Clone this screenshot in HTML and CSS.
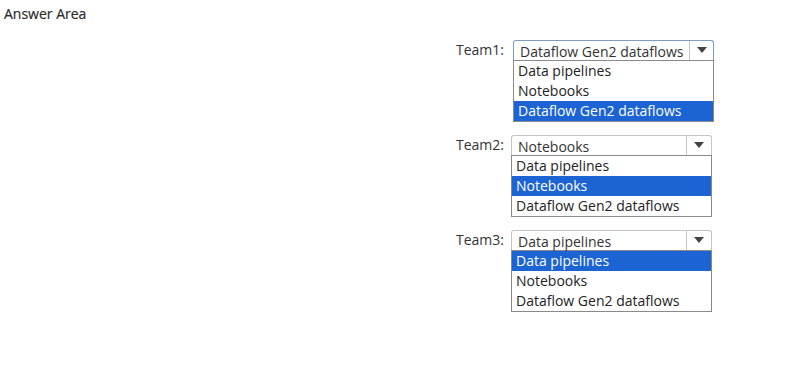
FILE: index.html
```html
<!DOCTYPE html>
<html lang="en">
<head>
  <meta charset="UTF-8">
  <meta name="viewport" content="width=device-width, initial-scale=1.0">
  <title>Answer Area</title>
  <link rel="stylesheet" href="styles.css">
</head>
<body>
  <div class="title">Answer Area</div>

  <div class="teams">
    <!-- Team1 -->
    <div class="team team-first">
      <div class="team-label">Team1:</div>
      <div class="dropdown">
        <div class="select focused">
          <span class="select-value">Dataflow Gen2 dataflows</span>
          <span class="select-arrow"></span>
        </div>
        <ul class="options">
          <li>Data pipelines</li>
          <li>Notebooks</li>
          <li class="selected">Dataflow Gen2 dataflows</li>
        </ul>
      </div>
    </div>

    <!-- Team2 -->
    <div class="team">
      <div class="team-label">Team2:</div>
      <div class="dropdown">
        <div class="select">
          <span class="select-value">Notebooks</span>
          <span class="select-arrow"></span>
        </div>
        <ul class="options">
          <li>Data pipelines</li>
          <li class="selected">Notebooks</li>
          <li>Dataflow Gen2 dataflows</li>
        </ul>
      </div>
    </div>

    <!-- Team3 -->
    <div class="team">
      <div class="team-label">Team3:</div>
      <div class="dropdown">
        <div class="select">
          <span class="select-value">Data pipelines</span>
          <span class="select-arrow"></span>
        </div>
        <ul class="options">
          <li class="selected">Data pipelines</li>
          <li>Notebooks</li>
          <li>Dataflow Gen2 dataflows</li>
        </ul>
      </div>
    </div>
  </div>
</body>
</html>
```

FILE: styles.css
```css
html, body {
  margin: 0;
  padding: 0;
  background: #fff;
  color: #222;
  font-family: "Open Sans", "Noto Sans", sans-serif;
  font-size: 14px;
}

.title {
  padding: 5px 0 0 4px;
  font-size: 14px;
  line-height: 18px;
  color: #2a2a2a;
  -webkit-text-stroke: 0.2px #2a2a2a;
}

.teams {
  display: flex;
  flex-direction: column;
  gap: 13px;
  margin: 17px 0 0 456px;
}

.team {
  display: flex;
  align-items: flex-start;
}

.team-label {
  width: 55px;
  line-height: 20px;
  font-size: 14px;
  color: #333;
}

.team-first .team-label {
  width: 57px;
}

.dropdown {
  width: 201px;
}

/* Closed select box */
.select {
  display: flex;
  height: 19px;
  border: 1px solid #c4c4c4;
  border-bottom: none;
  border-radius: 3px 3px 0 0;
}

.select.focused {
  border-color: #7f9cc4;
}

.select-value {
  flex: 1;
  padding: 0 6px;
  line-height: 22px;
  height: 19px;
  white-space: nowrap;
  color: #333;
}

.select-arrow {
  width: 24px;
  border-left: 1px solid #c4c4c4;
  position: relative;
}

.select-arrow::after {
  content: "";
  position: absolute;
  left: 7px;
  top: 6px;
  border-left: 5px solid transparent;
  border-right: 5px solid transparent;
  border-top: 6px solid #444;
}

/* Opened list */
.options {
  list-style: none;
  margin: 0;
  padding: 0;
  border: 1px solid #8a8a8a;
}

.options li {
  height: 20px;
  line-height: 20px;
  padding: 0 4px;
  white-space: nowrap;
}

.options li.selected {
  background: #1c63d3;
  color: #fff;
}
```
